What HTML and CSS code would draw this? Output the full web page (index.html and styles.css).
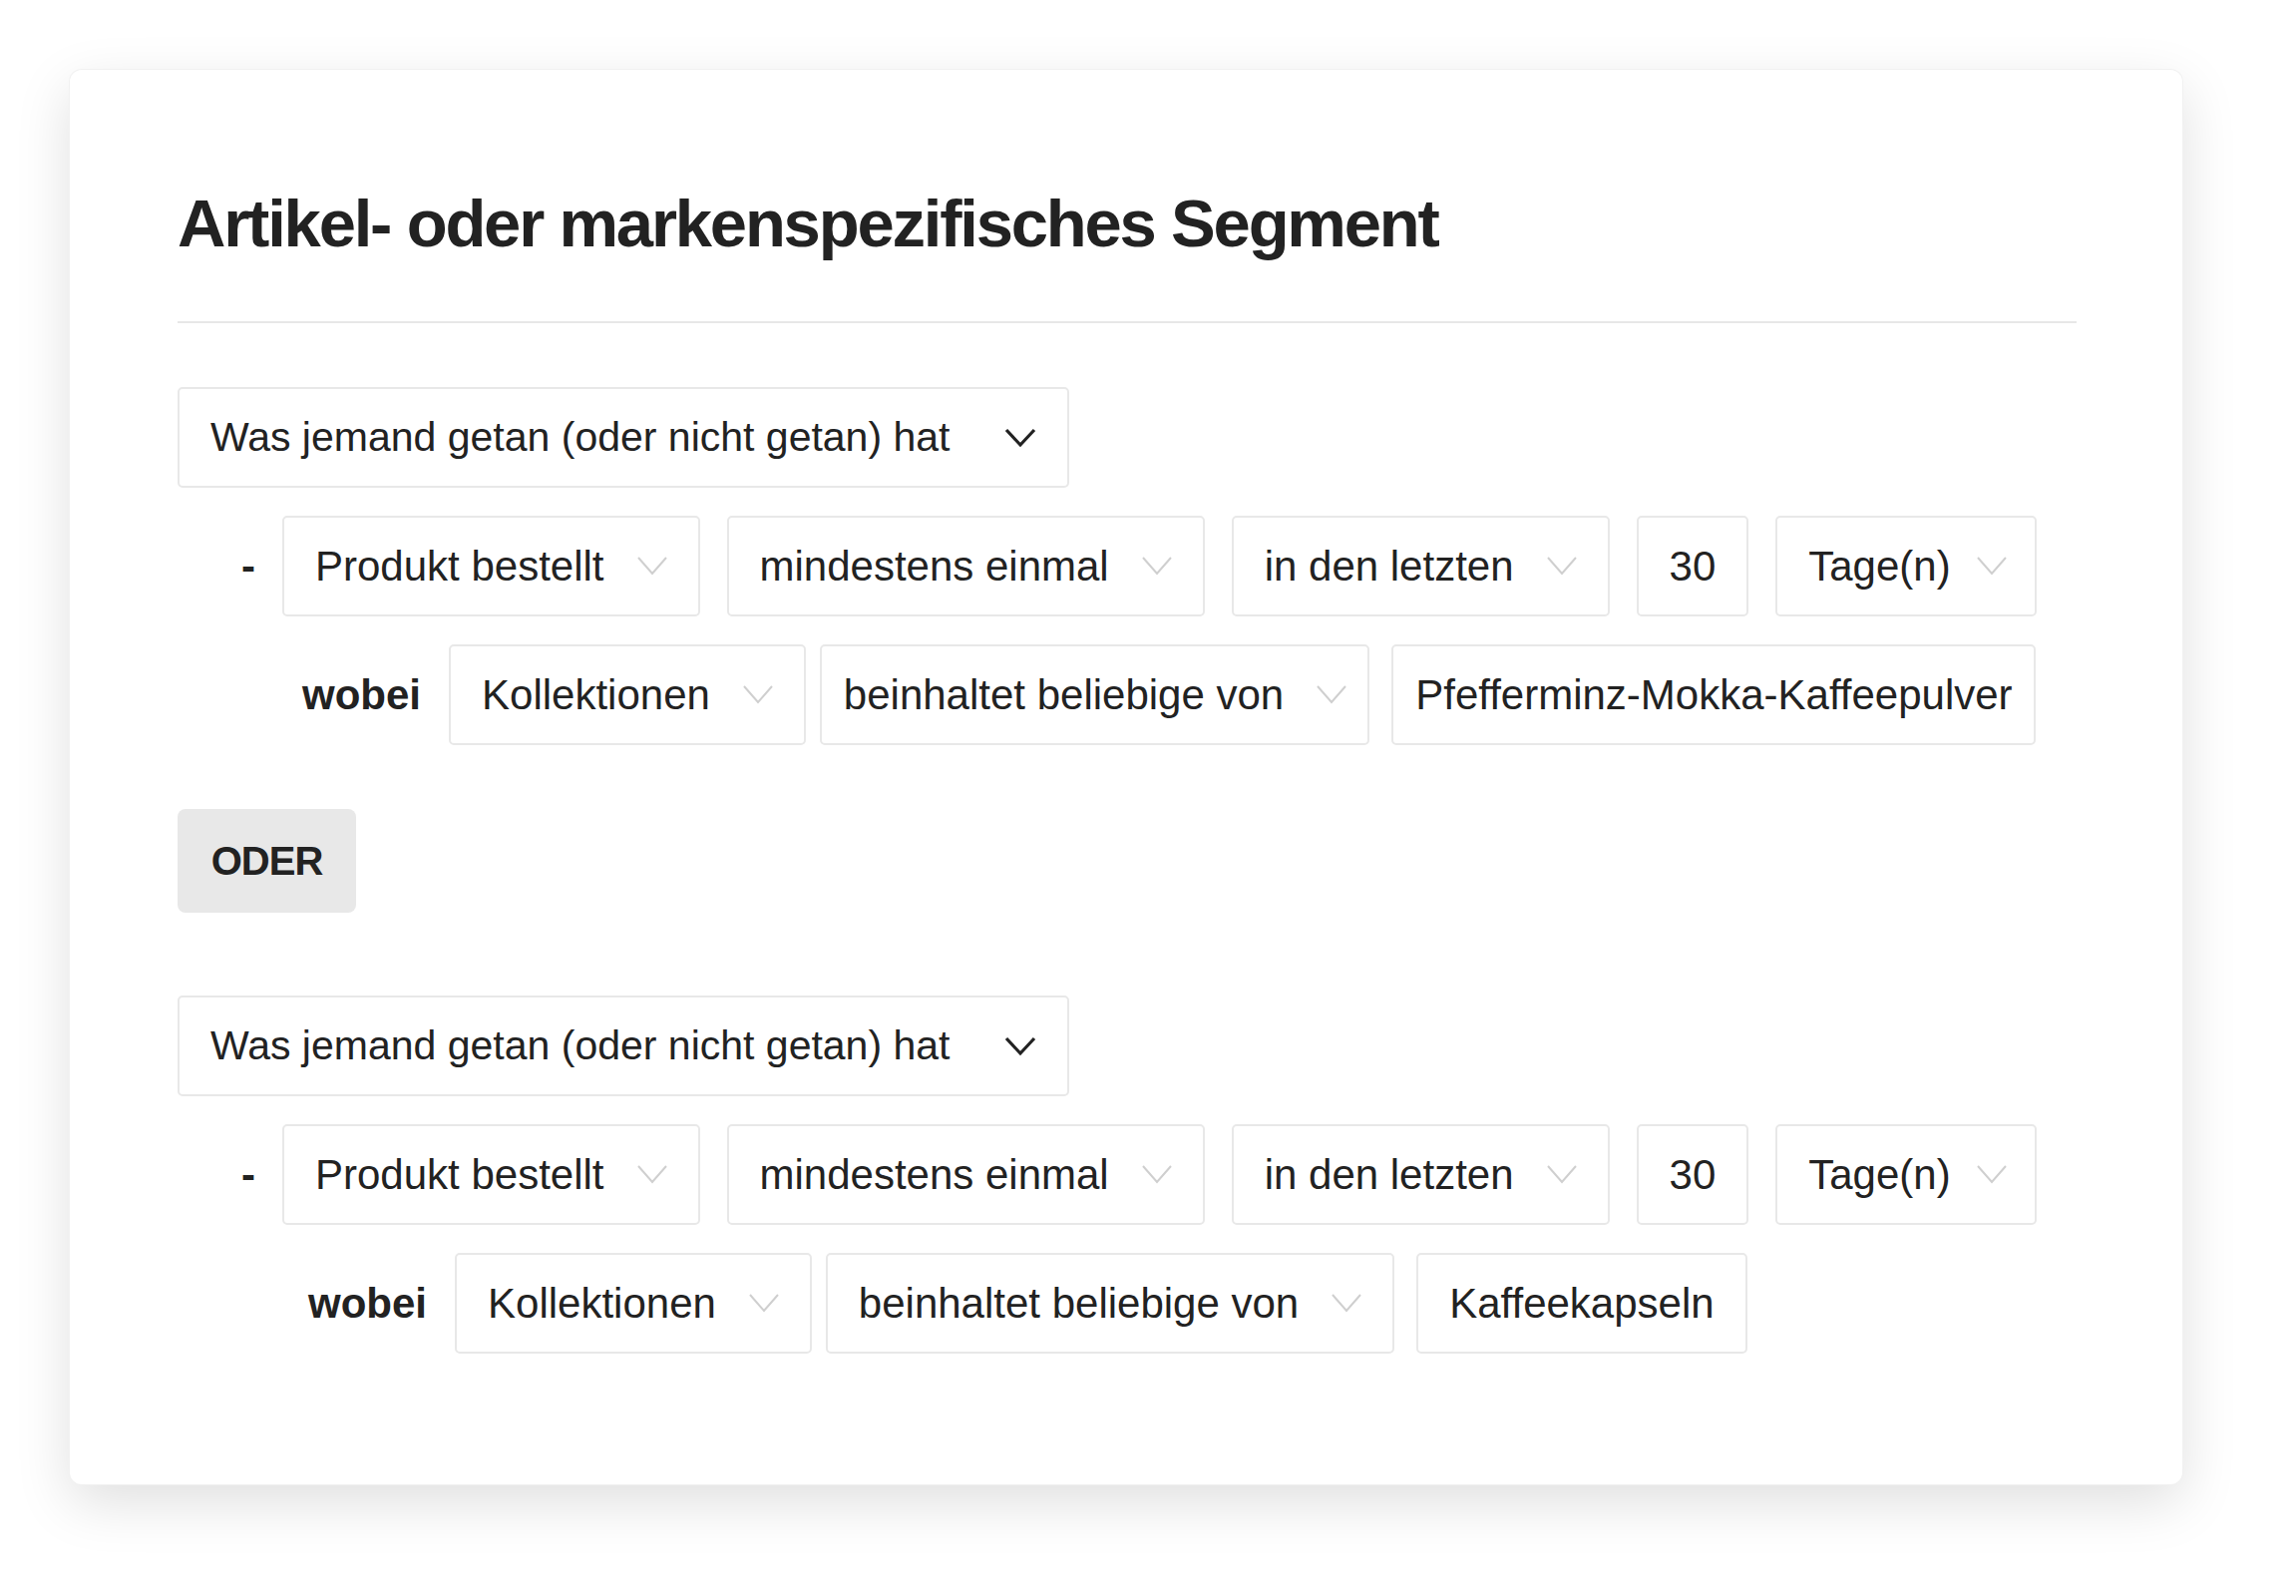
FILE: index.html
```html
<!DOCTYPE html>
<html lang="de">
<head>
    <meta charset="UTF-8">
    <title>Segment</title>
    <link rel="stylesheet" href="styles.css">
</head>
<body>
<div class="card">
    <h1 class="title">Artikel- oder markenspezifisches Segment</h1>
    <div class="divider"></div>

    <div class="group">
        <div class="row">
            <div class="box main">
                <span>Was jemand getan (oder nicht getan) hat</span>
                <svg class="chev dark" width="32" height="20" viewBox="0 0 32 20"><polyline points="2,2 16,17 30,2"/></svg>
            </div>
        </div>
        <div class="row cond">
            <span class="dash">-</span>
            <div class="box"><span>Produkt bestellt</span><svg class="chev" width="30" height="19" viewBox="0 0 30 19"><polyline points="1,1 15,17 29,1"/></svg></div>
            <div class="box"><span>mindestens einmal</span><svg class="chev" width="30" height="19" viewBox="0 0 30 19"><polyline points="1,1 15,17 29,1"/></svg></div>
            <div class="box"><span>in den letzten</span><svg class="chev" width="30" height="19" viewBox="0 0 30 19"><polyline points="1,1 15,17 29,1"/></svg></div>
            <div class="box"><span>30</span></div>
            <div class="box unit"><span>Tage(n)</span><svg class="chev" width="30" height="19" viewBox="0 0 30 19"><polyline points="1,1 15,17 29,1"/></svg></div>
        </div>
        <div class="row where">
            <span class="label">wobei</span>
            <div class="box"><span>Kollektionen</span><svg class="chev" width="30" height="19" viewBox="0 0 30 19"><polyline points="1,1 15,17 29,1"/></svg></div>
            <div class="box tight"><span>beinhaltet beliebige von</span><svg class="chev" width="30" height="19" viewBox="0 0 30 19"><polyline points="1,1 15,17 29,1"/></svg></div>
            <div class="box tight value"><span>Pfefferminz-Mokka-Kaffeepulver</span></div>
        </div>
    </div>

    <div class="or">ODER</div>

    <div class="group second">
        <div class="row">
            <div class="box main">
                <span>Was jemand getan (oder nicht getan) hat</span>
                <svg class="chev dark" width="32" height="20" viewBox="0 0 32 20"><polyline points="2,2 16,17 30,2"/></svg>
            </div>
        </div>
        <div class="row cond">
            <span class="dash">-</span>
            <div class="box"><span>Produkt bestellt</span><svg class="chev" width="30" height="19" viewBox="0 0 30 19"><polyline points="1,1 15,17 29,1"/></svg></div>
            <div class="box"><span>mindestens einmal</span><svg class="chev" width="30" height="19" viewBox="0 0 30 19"><polyline points="1,1 15,17 29,1"/></svg></div>
            <div class="box"><span>in den letzten</span><svg class="chev" width="30" height="19" viewBox="0 0 30 19"><polyline points="1,1 15,17 29,1"/></svg></div>
            <div class="box"><span>30</span></div>
            <div class="box unit"><span>Tage(n)</span><svg class="chev" width="30" height="19" viewBox="0 0 30 19"><polyline points="1,1 15,17 29,1"/></svg></div>
        </div>
        <div class="row where">
            <span class="label">wobei</span>
            <div class="box"><span>Kollektionen</span><svg class="chev" width="30" height="19" viewBox="0 0 30 19"><polyline points="1,1 15,17 29,1"/></svg></div>
            <div class="box"><span>beinhaltet beliebige von</span><svg class="chev" width="30" height="19" viewBox="0 0 30 19"><polyline points="1,1 15,17 29,1"/></svg></div>
            <div class="box value"><span>Kaffeekapseln</span></div>
        </div>
    </div>
</div>
</body>
</html>
```

FILE: styles.css
```css
*{margin: 0; padding: 0; box-sizing: border-box}

body{
    background: #ffffff;
    padding: 70px;
    font-family: "Liberation Sans", Arial, sans-serif;
    color: #222222;
}

.card{
    width: 2118px;
    background: #ffffff;
    border-radius: 12px;
    padding: 114px 106px 131px 108px;
    box-shadow: 0 0 0 1px #f1f1f1, 0 18px 55px rgba(0, 0, 0, 0.13);
}

.title{
    font-size: 67px;
    line-height: 80px;
    font-weight: bold;
    letter-spacing: -2.2px;
    color: #222222;
}
.divider{
    height: 2px;
    margin-top: 58px;
    background: #e7e7e7;
}

.group{
    margin-top: 64px;
    display: flex;
    flex-direction: column;
    gap: 28px;
}
.group.second{
    margin-top: 83px;
}

.row{
    display: flex;
    align-items: center;
    gap: 27px;
}
.cond{
    padding-left: 64px;
}
.where{
    padding-left: 125px;
    gap: 14px;
}
.second .where{
    padding-left: 131px;
}
.where .label{
    margin-right: 14px;
}
.where .value{
    margin-left: 8px;
}

.dash{
    font-size: 42px;
    font-weight: bold;
    width: 14px;
}
.label{
    font-size: 42px;
    font-weight: bold;
}

.box{
    height: 101px;
    display: flex;
    align-items: center;
    gap: 33px;
    padding: 0 31px;
    border: 2px solid #e8e8e8;
    border-radius: 5px;
    font-size: 42px;
    white-space: nowrap;
    background: #ffffff;
}
.box.main{
    font-size: 41px;
    gap: 55px;
}
.box.unit{
    gap: 26px;
    padding-right: 28px;
}
.box.tight{
    padding: 0 21px 0 22px;
}

.chev{
    fill: none;
    stroke: #cfcfcf;
    stroke-width: 2;
    flex-shrink: 0;
}
.chev.dark{
    stroke: #222222;
    stroke-width: 3.2;
}

.or{
    margin-top: 64px;
    width: 179px;
    height: 104px;
    display: flex;
    align-items: center;
    justify-content: center;
    background: #e8e8e8;
    border-radius: 8px;
    font-size: 40px;
    font-weight: bold;
    letter-spacing: -1px;
}
```
